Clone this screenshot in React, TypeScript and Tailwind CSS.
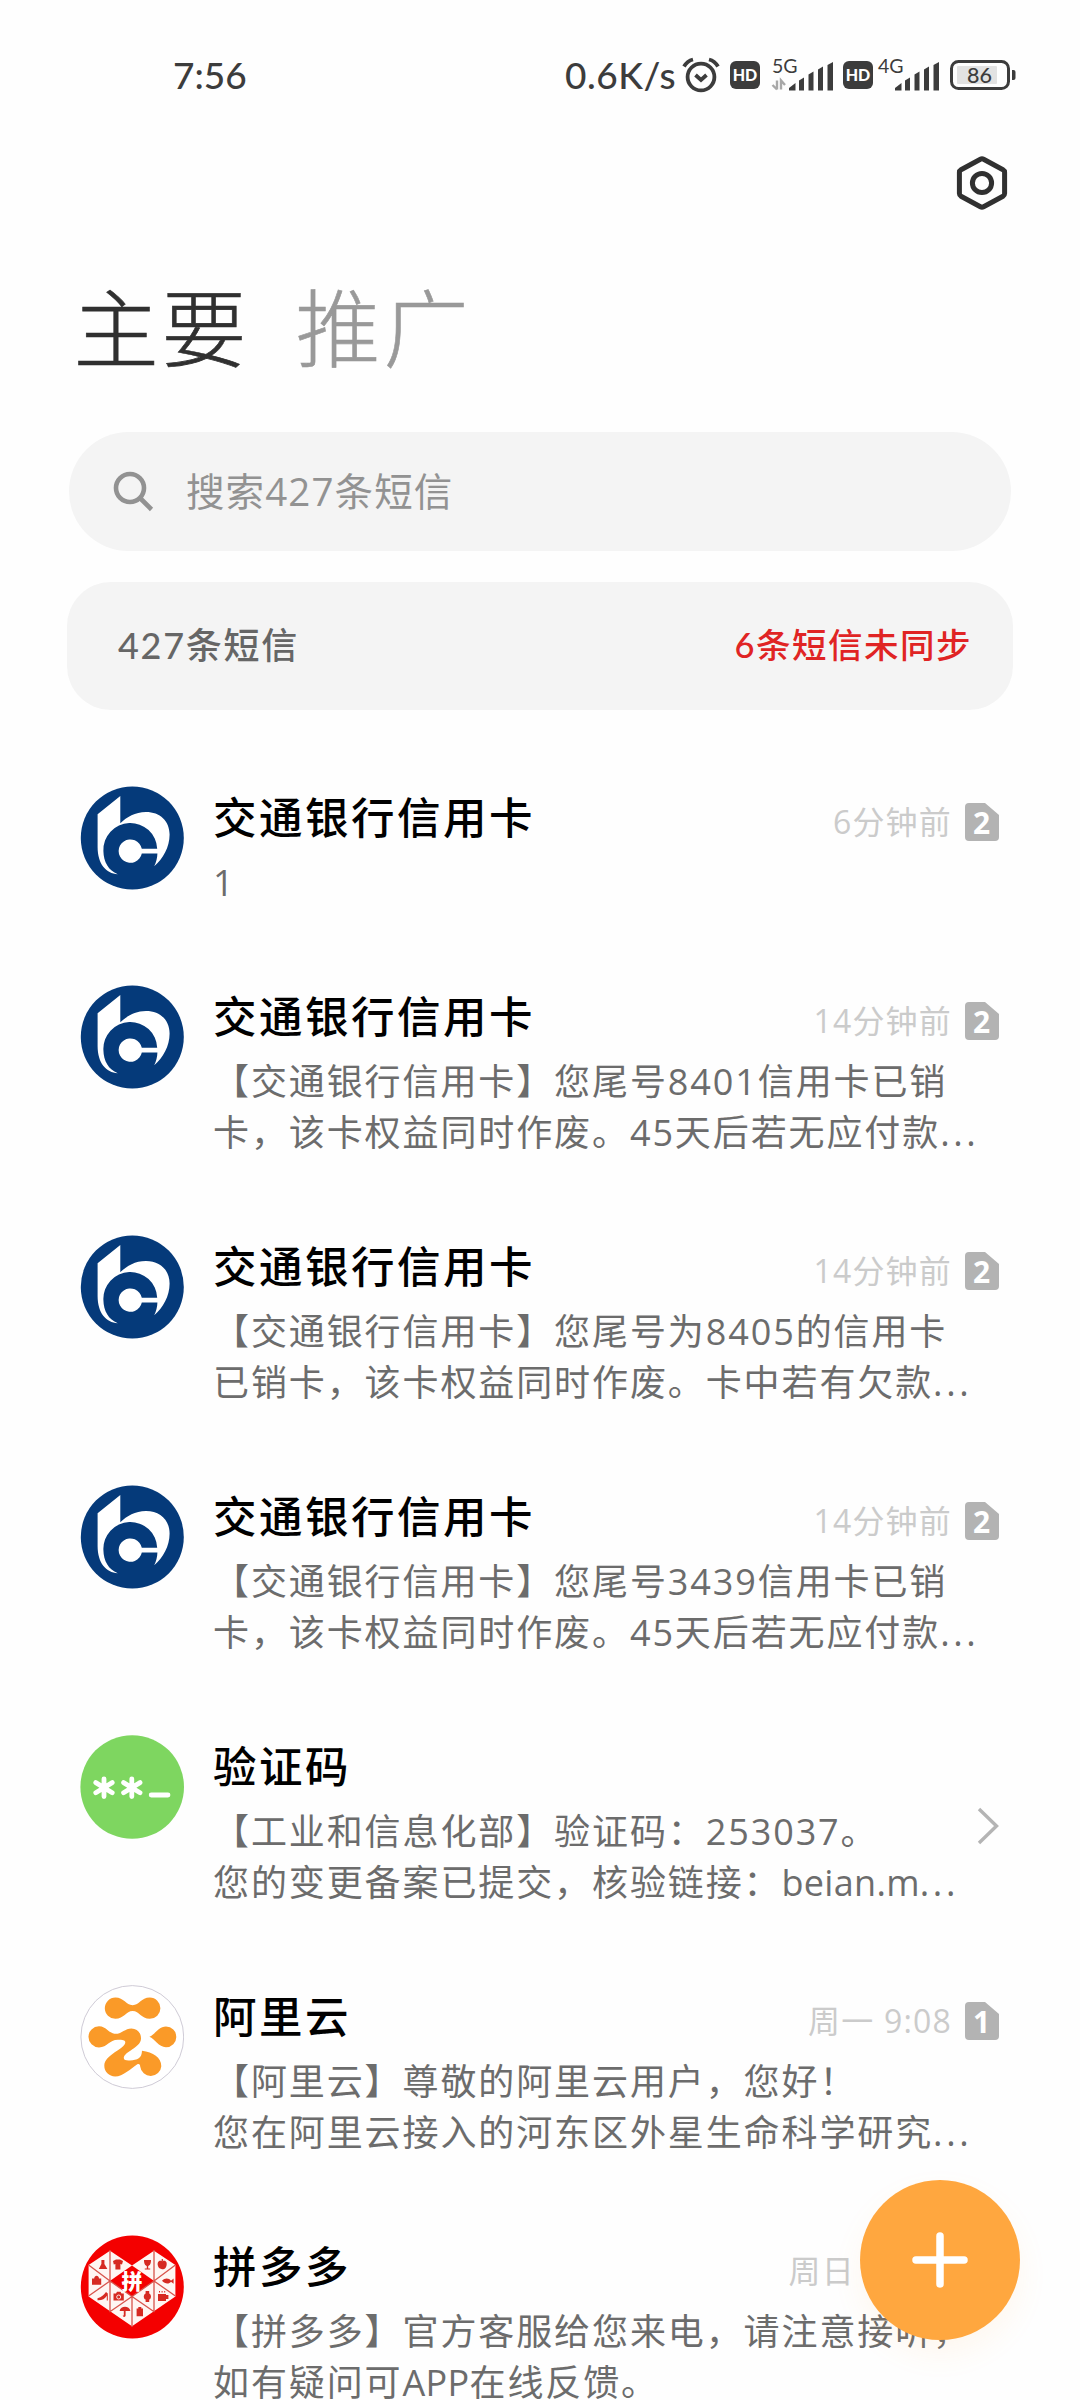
import type { ReactNode } from 'react'

type Message = {
  id: number
  avatar: ReactNode
  name: string
  lines: string[]
  time?: string
  sim?: number
  arrow?: boolean
}

function BankLogo() {
  return (
    <svg viewBox="0 0 104 104" className="w-[104px] h-[104px] shrink-0">
      <circle cx="52.3" cy="52" r="51.5" fill="#053a7a" />
      <path
        d="M40.3 10 L17.6 28.3 V61 C17.6 78 26 87.5 37.8 88.2 C28.5 84.5 23.6 76 23.4 65 A26.9 26.9 0 0 1 77.2 62.8 H61.8 A11.7 11.7 0 1 0 61.8 67.4 H77.4 C77.3 72 76.2 76 74.2 80.3 C83 73 89.6 61 89.6 48.5 C89.6 35 80 26 66 26 C55 26 47 31 40.3 37.2 Z"
        fill="#fff"
      />
    </svg>
  )
}

function CodeLogo() {
  return (
    <svg viewBox="0 0 104 104" className="w-[104px] h-[104px] shrink-0">
      <circle cx="52.2" cy="52" r="51.8" fill="#7ed660" />
      <g stroke="#fff" strokeWidth="4.8" strokeLinecap="round">
        <path d="M24 43.8V61.6M15.8 47.6L32.2 57.8M32.2 47.6L15.8 57.8" />
        <path d="M51.8 43.8V61.6M43.6 47.6L60 57.8M60 47.6L43.6 57.8" />
        <path d="M71.2 60H88" />
      </g>
    </svg>
  )
}

function AliyunLogo() {
  return (
    <svg viewBox="0 0 104 104" className="w-[104px] h-[104px] shrink-0">
      <circle cx="52.3" cy="52" r="51.4" fill="#fff" stroke="#cfcbd6" />
      <g fill="#fa9a28">
        <path d="M35.4 12.6 C44 12.6 46 20.2 52.6 20.2 C59.5 20.2 61 12.6 69.8 12.6 A10.6 10.6 0 0 1 69.8 33.8 C61 33.8 59.5 26 52.6 26 C46 26 44 33.8 35.4 33.8 A10.6 10.6 0 0 1 35.4 12.6 Z" />
        <path d="M19 41.3 C26.5 41.3 28.5 48.8 36 48.8 C42 48.8 45 43.6 51.5 43.6 C57 43.6 61 47.6 61 53.4 C61 62.6 43.8 66.5 43.8 73 C43.8 75.2 46.5 75.6 50 75.4 C57.5 75.2 61.8 73.5 62 65.8 C73 67 81.3 72.6 81.3 81.2 A10.6 10.6 0 0 1 60.2 81.6 C60.2 79.2 59 78.2 57 79.4 C50.5 83.6 43 91.4 35.2 91.4 C29 91.4 24.3 86.7 24.3 80.8 C24.3 69.5 45.3 64 45.3 57.2 C45.3 55.2 42.4 54.8 38 54.8 C29 54.8 27.5 62.4 19 62.4 A10.5 10.5 0 0 1 19 41.3 Z" />
        <path d="M69.4 51.8 C75 49.5 78.5 41.6 86 41.6 A10.3 10.3 0 0 1 86 62.2 C78.5 62.2 75 54 69.4 51.8 Z" />
      </g>
    </svg>
  )
}

function PinLogo() {
  return (
    <svg viewBox="0 0 104 104" className="w-[104px] h-[104px] shrink-0">
      <circle cx="52.3" cy="52" r="51.5" fill="#f40000" />
      <path d="M30 15.7 L8.6 30 V61.5 L52 91.3 L95.4 61.5 V30 L74 15.7 L52 30.5 Z" fill="#fff6f3" />
      <path d="M52 30.5 L74.2 46 L52 61.5 L29.8 46 Z" fill="#f40000" />
      <path
        d="M30 15V77M74 15V77M52 61V92M8.6 30L30 46L52 61.5L74.5 77M95.4 30L74 46L52 61.5L29.5 77M30 46L8.6 61M74 46L95.4 61"
        fill="none"
        stroke="#d8544c"
        strokeWidth="1.3"
      />
      <text x="52" y="53.6" fontSize="21" fontWeight="900" fill="#fff" textAnchor="middle">拼</text>
      <g fill="#d62a22">
        <path d="M21.4 25h3v4l3 5h-8.6l2.6-5Z" />
        <path d="M33 26l3-1.4h4l3 1.4-1 3.4-1.6-.4v5.4h-5v-5.4l-1.6.4Z" />
        <path d="M64 25h7c0 4-1.2 5.4-2.8 6v2.4h2v1.2h-5.4v-1.2h2V31c-1.6-.6-2.8-2-2.8-6Z" />
        <path d="M82.2 26.2c4-1.6 5 1.6 4.4 4-.6 3-2.4 4.6-4.4 4s-3.8-1-4.4-4c-.5-2.4.4-5.6 4.4-4Zm-.5-2.2h1.2v2h-1.2Z" />
        <path d="M12 43.5h2.2c.2-3.6 4.6-3.6 4.8 0h2.2v6.2H12Z" />
        <path d="M82 45.8c3-3.2 7-2.8 9 0l2.6-2.4v5.4L91 46.8c-2 2.6-6 2.4-9-1Z" />
        <path d="M17.5 63.2c4-.8 6.5-3.4 8.5-6.2l1.8 1.4v7h-1v-4.6c-2 3.4-5 4.6-9.3 4.4Z" />
        <path d="M33.5 58.5h2.5l1-1.8h3.5l1 1.8h2.3v7H33.5Z" />
        <path d="M65.6 56h3.6v2.4c2.4 1.2 2.4 5 0 6.2V67h-3.6v-2.4c-2.4-1.2-2.4-5 0-6.2Z" />
        <path d="M78 59h8v1h2.4v4H86v2h-8Zm1-3h1v1.6h-1Zm2.6 0h1v1.6h-1Zm2.6 0h1v1.6h-1Z" />
        <path d="M39.6 76c1-5.6 9.8-5.6 10.8 0h-4.8v4.6c0 1.8-2.8 1.8-2.8 0h1v-4.6Z" />
        <path d="M58.3 72h3v1.6h1.7v7.6h-6.4v-7.6h1.7Z" />
      </g>
      <circle cx="38.7" cy="62" r="2" fill="none" stroke="#fff6f3" strokeWidth="0.9" />
    </svg>
  )
}

const messages: Message[] = [
  { id: 1, avatar: <BankLogo />, name: '交通银行信用卡', lines: ['1'], time: '6分钟前', sim: 2 },
  {
    id: 2,
    avatar: <BankLogo />,
    name: '交通银行信用卡',
    lines: ['【交通银行信用卡】您尾号8401信用卡已销', '卡，该卡权益同时作废。45天后若无应付款...'],
    time: '14分钟前',
    sim: 2,
  },
  {
    id: 3,
    avatar: <BankLogo />,
    name: '交通银行信用卡',
    lines: ['【交通银行信用卡】您尾号为8405的信用卡', '已销卡，该卡权益同时作废。卡中若有欠款...'],
    time: '14分钟前',
    sim: 2,
  },
  {
    id: 4,
    avatar: <BankLogo />,
    name: '交通银行信用卡',
    lines: ['【交通银行信用卡】您尾号3439信用卡已销', '卡，该卡权益同时作废。45天后若无应付款...'],
    time: '14分钟前',
    sim: 2,
  },
  {
    id: 5,
    avatar: <CodeLogo />,
    name: '验证码',
    lines: ['【工业和信息化部】验证码：253037。', '您的变更备案已提交，核验链接：beian.m...'],
    arrow: true,
  },
  {
    id: 6,
    avatar: <AliyunLogo />,
    name: '阿里云',
    lines: ['【阿里云】尊敬的阿里云用户，您好！', '您在阿里云接入的河东区外星生命科学研究...'],
    time: '周一 9:08',
    sim: 1,
  },
  {
    id: 7,
    avatar: <PinLogo />,
    name: '拼多多',
    lines: ['【拼多多】官方客服给您来电，请注意接听，', '如有疑问可APP在线反馈。'],
    time: '周日 19:33',
    sim: 2,
  },
]

function HdIcon() {
  return (
    <svg viewBox="0 0 30 28" className="w-[30px] h-7 overflow-visible">
      <rect width="30" height="28" rx="6" fill="#3c3c3c" />
      <text x="15" y="19.5" fontSize="16" fontWeight="900" fill="#fff" textAnchor="middle" fontFamily="Lato, sans-serif">
        HD
      </text>
    </svg>
  )
}

function Signal({ label, data }: { label: string; data?: boolean }) {
  return (
    <svg viewBox="0 0 62 34" className="w-[62px] h-[34px] overflow-visible">
      <text x="0" y="15" fontSize="19.5" fontWeight="400" fill="#3c3c3c" fontFamily="Lato, sans-serif">
        {label}
      </text>
      {data && (
        <path d="M5 22.5v9M0.5 27l4.5 4.5M9 31.5v-9l4 4.5" fill="none" stroke="#a8a8a8" strokeWidth="2.4" />
      )}
      <g fill="#3c3c3c">
        <path d="M17 32v-2l6.5-5v7.5h-6.5Z" />
        <path d="M27 22.5l5-3v13h-5Z" />
        <path d="M36.5 16.5l5-3v19h-5Z" />
        <path d="M46 11.5l5-3v24h-5Z" />
        <path d="M55.5 7l5.5-3v28.5h-5.5Z" />
      </g>
    </svg>
  )
}

function StatusBar() {
  return (
    <div className="flex items-center h-[150px] pl-[173px] pr-[64px] text-[#3c3c3c] font-['Lato',sans-serif] font-medium text-[37px]">
      <span>7:56</span>
      <div className="flex items-center ml-auto">
        <span className="tracking-[0.5px]">0.6K/s</span>
        <svg viewBox="0 0 38 36" className="w-[38px] h-9 ml-[6px]" fill="none" stroke="#3c3c3c" strokeWidth="3.8">
          <circle cx="19" cy="20" r="13.4" />
          <path d="M13.5 18l5.5 5 5.5-5" />
          <path d="M2 9.5C4 6 7 3.5 11 2.5M36 9.5C34 6 31 3.5 27 2.5" />
        </svg>
        <div className="ml-[10px]"><HdIcon /></div>
        <div className="ml-[12px]"><Signal label="5G" data /></div>
        <div className="ml-[9px]"><HdIcon /></div>
        <div className="ml-[5px]"><Signal label="4G" /></div>
        <svg viewBox="0 0 66 30" className="w-[66px] h-[30px] ml-[10px] overflow-visible">
          <rect x="1.5" y="1.5" width="57" height="27" rx="7" fill="none" stroke="#3c3c3c" strokeWidth="3" />
          <rect x="7" y="6" width="40" height="18" rx="1" fill="#e2e2e2" />
          <path d="M62 10h1.5q2 0 2 2v6q0 2-2 2H62Z" fill="#3c3c3c" />
          <text x="29.5" y="22.5" fontSize="21.5" fill="#3c3c3c" textAnchor="middle" fontFamily="Lato, sans-serif">
            86
          </text>
        </svg>
      </div>
    </div>
  )
}

function SimBadge({ n }: { n: number }) {
  return (
    <svg viewBox="0 0 34 38" className="w-[34px] h-[38px] ml-[13px] overflow-visible">
      <path d="M4 0H20L34 12V34Q34 38 30 38H4Q0 38 0 34V4Q0 0 4 0Z" fill="#b3b3b3" />
      <text x="16.5" y="30.5" fontSize="30" fontWeight="700" fill="#fff" textAnchor="middle">
        {n}
      </text>
    </svg>
  )
}

// latin letters sit tighter than the hanzi, the trailing dots a bit looser
function PreviewLine({ line }: { line: string }) {
  return (
    <p>
      {line.split(/(\.\.\.$|[A-Za-z]+(?:\.[a-z])?)/).map((part, i) => {
        if (part === '...') return <span key={i} className="tracking-[3.6px]">{part}</span>
        if (/^[A-Za-z]/.test(part)) return <span key={i} className="tracking-[0.3px]">{part}</span>
        return part
      })}
    </p>
  )
}

function MessageRow({ message }: { message: Message }) {
  return (
    <div className={message.lines.length > 1 ? 'flex h-[250px] pl-20 pr-[81px]' : 'flex h-[199px] pl-20 pr-[81px]'}>
      {message.avatar}
      <div className="flex-1 min-w-0 ml-[29px]">
        <div className="flex items-start justify-between">
          <h2 className="mt-[2px] text-[43.5px] leading-[60px] tracking-[2.5px] font-medium text-black whitespace-nowrap">
            {message.name}
          </h2>
          {message.time && (
            <div className="flex items-center mt-[17px]">
              <span className="text-[32px] leading-[34px] tracking-[1.2px] font-normal text-[#cbcbcb] whitespace-pre">
                {message.time}
              </span>
              <SimBadge n={message.sim ?? 1} />
            </div>
          )}
        </div>
        <div className="mt-[9px] text-[36px] leading-[51px] tracking-[1.9px] font-normal text-[#6c6c6c] whitespace-nowrap">
          {message.lines.map((line) => (
            <PreviewLine key={line} line={line} />
          ))}
        </div>
      </div>
      {message.arrow && (
        <svg viewBox="0 0 22 38" className="w-[22px] h-[38px] mt-[72px] shrink-0">
          <path d="M2 2L19.5 19L2 36" fill="none" stroke="#b4b4b4" strokeWidth="3.4" />
        </svg>
      )}
    </div>
  )
}

export default function App() {
  return (
    <div className="relative w-[1080px] h-[2400px] overflow-hidden bg-[#fefefe] font-['Open_Sans','Noto_Sans_CJK_SC',sans-serif]">
      <StatusBar />
      <div className="flex justify-end items-center h-[66px] pr-[72px]">
        <svg viewBox="0 0 52 54" className="w-[52px] h-[54px]" fill="none" stroke="#303030" strokeWidth="5" strokeLinejoin="round">
          <path d="M24.4 3.3Q26 2.4 27.6 3.3L47 13.7Q48.6 14.6 48.6 16.4V37.6Q48.6 39.4 47 40.3L27.6 50.7Q26 51.6 24.4 50.7L5 40.3Q3.4 39.4 3.4 37.6V16.4Q3.4 14.6 5 13.7Z" />
          <circle cx="26" cy="27" r="9.6" />
        </svg>
      </div>

      <div className="flex gap-[46px] h-[216px] pl-[73.5px] pt-[70px] text-[85px] leading-[84px] tracking-[3px] font-light [-webkit-text-stroke:0.6px]">
        <span className="text-[#303030]">主要</span>
        <span className="text-[#999]">推广</span>
      </div>

      <div className="flex items-center h-[119px] mx-[69px] pl-11 rounded-full bg-[#f4f4f4]">
        <svg viewBox="0 0 42 42" className="w-[42px] h-[42px]" fill="none" stroke="#929292" strokeWidth="4.6">
          <circle cx="17" cy="17" r="14" />
          <path d="M27 27L38.5 38.5" />
        </svg>
        <span className="ml-[31px] text-[38.5px] tracking-[1.1px] font-normal text-[#929292]">搜索427条短信</span>
      </div>

      <div className="flex items-center justify-between h-32 mt-[31px] mx-[67px] pl-[51px] pr-[41px] pb-[2px] rounded-[44px] bg-[#f4f4f4] font-['Lato','Noto_Sans_CJK_SC',sans-serif] font-medium">
        <span className="text-[36px] tracking-[1.7px] text-[#666]">427条短信</span>
        <span className="text-[34.5px] tracking-[1.5px] text-[#e02424]">6条短信未同步</span>
      </div>

      <div className="mt-[76px]">
        {messages.map((message) => (
          <MessageRow key={message.id} message={message} />
        ))}
      </div>

      <div className="absolute left-[860px] top-[2180px] flex items-center justify-center w-40 h-40 rounded-full bg-[#ffa73f] shadow-[0_14px_30px_rgba(255,167,63,0.08)]">
        <svg viewBox="0 0 56 56" className="w-14 h-14" stroke="#fff" strokeWidth="7.5" strokeLinecap="round">
          <path d="M28 4V52M4 28H52" />
        </svg>
      </div>
    </div>
  )
}
